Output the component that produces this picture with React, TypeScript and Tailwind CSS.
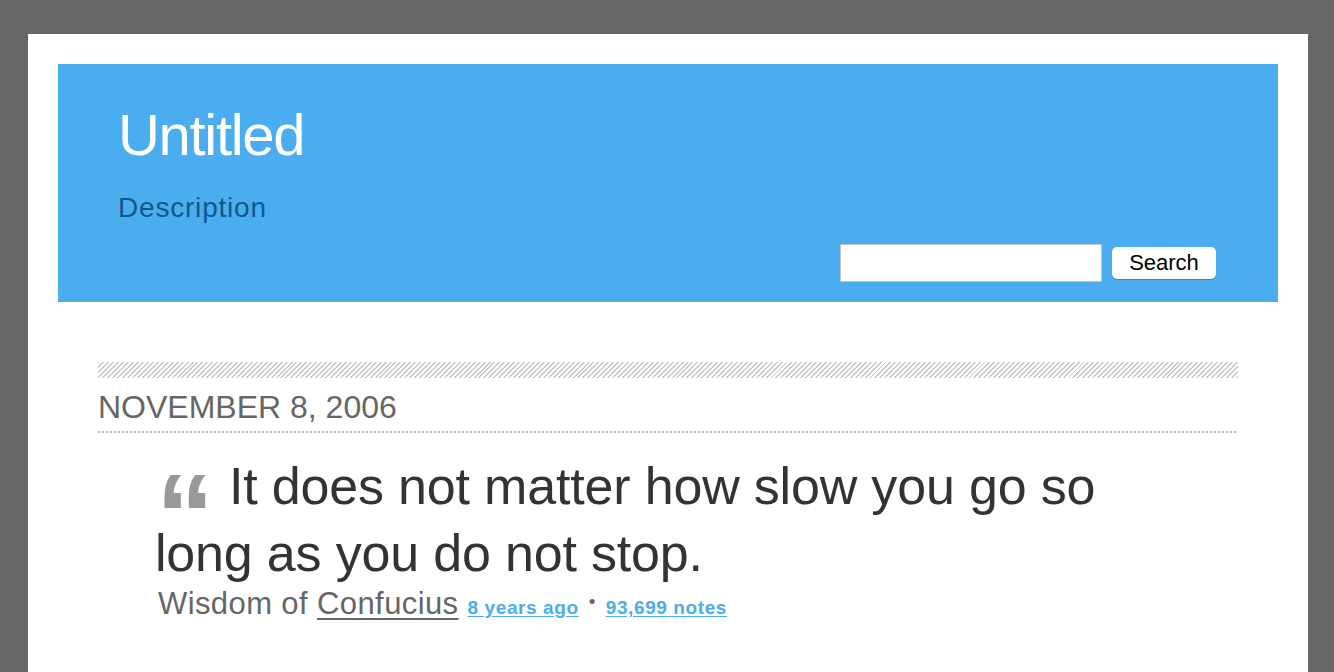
import React from "react";

export default function App() {
  const sans = { fontFamily: '"Liberation Sans", Arial, Helvetica, sans-serif' };
  return (
    <div className="min-h-[672px] bg-[#666666] pt-[34px] pl-[28px] pr-[26px]" style={sans}>
      <div className="bg-white min-h-[700px] px-[30px] pt-[30px]">
        <header className="bg-[#4aadf0] h-[238px] pt-[42px] pl-[60px] pr-[62px] flex flex-col">
          <h1 className="text-[58px] leading-[58px] text-white tracking-[-1.3px]">Untitled</h1>
          <p className="mt-[30px] text-[28px] leading-[28px] text-[#0e5a8c] tracking-[0.8px]">Description</p>
          <form
            className="mt-[22px] flex items-center justify-end gap-[10px]"
            onSubmit={(e) => e.preventDefault()}
          >
            <input
              type="text"
              className="w-[262px] h-[38px] bg-white border border-[#c2c2c2] outline-none"
            />
            <button
              type="submit"
              className="w-[104px] h-[32px] bg-white rounded-[5px] text-[22px] leading-[32px] text-black shadow-[0_1px_1px_rgba(0,0,0,0.25)]"
            >
              Search
            </button>
          </form>
        </header>

        <main className="px-[40px]">
          <div className="mt-[60px] h-[16px] bg-[repeating-linear-gradient(135deg,#c8c8c8_0px,#c8c8c8_1.4px,transparent_1.4px,transparent_3.5px)]" />
          <div className="mt-[13px] text-[32px] leading-[32px] text-[#666666]">NOVEMBER 8, 2006</div>
          <div className="mt-[8px] h-[2px] bg-[repeating-linear-gradient(90deg,#b3b3b3_0px,#b3b3b3_2px,transparent_2px,transparent_4px)]" />

          <div className="ml-[57px] mt-[20px] pr-[80px]">
            <blockquote className="relative text-[52px] leading-[67px] text-[#333333] indent-[74px] tracking-[-0.18px]">
              <span
                className="absolute left-[1px] top-[63px] h-0 indent-0 tracking-[3px] text-[116px] leading-[0px] font-bold text-[#999999]"
                aria-hidden="true"
              >
                “
              </span>
              It does not matter how slow you go so long as you do not stop.
            </blockquote>
            <div className="mt-[1px] text-[31px] leading-[31px] text-[#666666] pl-[3px] tracking-[0.4px]">
              Wisdom of{" "}
              <a href="#" className="underline decoration-[2px] underline-offset-[4px] text-[#666666]">
                Confucius
              </a>{" "}
              <a
                href="#"
                className="text-[19px] font-bold text-[#4aadf0] underline underline-offset-[2px] tracking-[0.6px]"
              >
                8 years ago
              </a>
              <span className="text-[19px] text-[#666666] mx-[10px] relative top-[-6px]">•</span>
              <a
                href="#"
                className="text-[19px] font-bold text-[#4aadf0] underline underline-offset-[2px] tracking-[0.6px]"
              >
                93,699 notes
              </a>
            </div>
          </div>
        </main>
      </div>
    </div>
  );
}
